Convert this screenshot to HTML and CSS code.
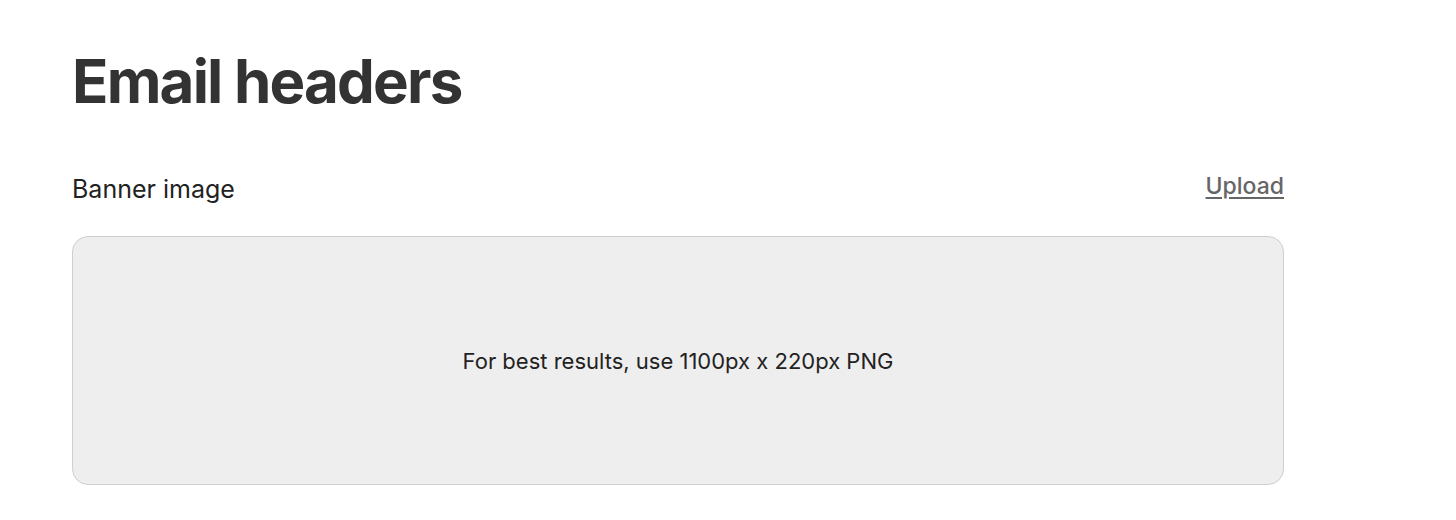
FILE: index.html
```html
<!DOCTYPE html>
<html>
<head>
<meta charset="utf-8">
<link rel="stylesheet" href="styles.css">
</head>
<body>
<main class="page">
  <h1 class="title">Email headers</h1>
  <section class="field">
    <div class="field-head">
      <span class="label">Banner image</span>
      <a class="upload" href="#">Upload</a>
    </div>
    <div class="dropzone">
      <span class="hint">For best results, use 1100px x 220px PNG</span>
    </div>
  </section>
</main>
</body>
</html>
```
FILE: styles.css
```css
* { box-sizing: border-box; }
html, body { margin: 0; padding: 0; background: #fff; }
body { font-family: Inter, "Noto Sans", sans-serif; color: #222; }
.page { width: 1212px; margin-left: 72px; padding-top: 45px; }
.title {
  margin: 0;
  font-size: 60px;
  font-weight: 700;
  line-height: 72px;
  color: #333;
  letter-spacing: -1.8px;
}
.field { margin-top: 56px; }
.field-head {
  display: flex;
  justify-content: space-between;
  align-items: flex-start;
  height: 63px;
}
.label { font-size: 25px; line-height: 32px; color: #222; }
.upload {
  font-size: 23px;
  line-height: 26px;
  color: #666;
  text-decoration: underline;
  text-underline-offset: 3px;
  font-weight: 500;
}
.dropzone {
  height: 249px;
  border: 1px solid #cfcfcf;
  border-radius: 16px;
  background: #eeeeee;
  display: flex;
  align-items: center;
  justify-content: center;
}
.hint { font-size: 22px; color: #222; }
```
